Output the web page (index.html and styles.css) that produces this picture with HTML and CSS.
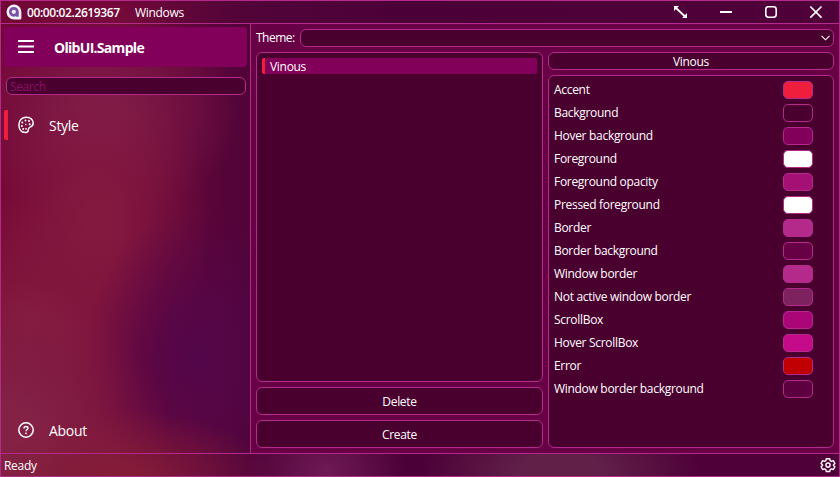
FILE: index.html
```html
<!DOCTYPE html>
<html lang="en">
<head>
<meta charset="utf-8">
<title>OlibUI.Sample</title>
<link rel="stylesheet" href="styles.css">
</head>
<body>
<div class="window">
  <header class="titlebar">
    <svg class="logo" width="16" height="16" viewBox="0 0 16 16"><path d="M8 .5a7.500 7.500 0 1 0 0 15h5.800a1.600 1.600 0 0 0 1.600-1.600V8A7.500 7.500 0 0 0 8 .5z" fill="#f5f0f8"/><circle cx="7.800" cy="7.800" r="3.500" fill="none" stroke="#7950a5" stroke-width="2.700"/><path d="M10 7.800h2.700v4.900H10z" fill="#7950a5"/></svg>
    <span class="clock">00:00:02.2619367</span>
    <span class="platform">Windows</span>
    <div class="controls">
      <svg width="45" height="22" viewBox="0 0 45 22" fill="none" stroke="#fff" stroke-width="1.800"><path d="M18 7l9 8.500"/><path d="M16 5h5l-5 5zM29 17h-5l5-5z" fill="#fff" stroke="none"/></svg>
      <svg width="45" height="22" viewBox="0 0 45 22"><path d="M17 10h12v2H17z" fill="#fff"/></svg>
      <svg width="45" height="22" viewBox="0 0 45 22" fill="none" stroke="#fff" stroke-width="1.6"><rect x="17.800" y="5.800" width="10.400" height="10.400" rx="2.600"/></svg>
      <svg width="45" height="22" viewBox="0 0 45 22" fill="none" stroke="#fff" stroke-width="1.700"><path d="M17.300 5.500l11.200 11.200M28.500 5.500L17.300 16.700"/></svg>
    </div>
  </header>
  <div class="body">
    <nav class="sidebar">
      <div class="pane-head">
        <svg width="16" height="14" viewBox="0 0 16 14" fill="#fff"><path d="M0 0h16v2H0zM0 5.500h16v2H0zM0 11h16v2H0z"/></svg>
        <span>OlibUI.Sample</span>
      </div>
      <div class="search">Search</div>
      <div class="nav-item selected">
        <svg width="16" height="18" viewBox="0 0 16 18"><path d="M8.300 1.200C4.200 1.200.9 4.300.9 8.800c0 4.200 2.200 7.700 6.400 7.700 2.100 0 2.900-1 2.900-2.300 0-1.500.3-2.500 1.900-3.100 1.700-.6 3.100-1.400 3.100-4.100 0-3.300-3-5.800-6.900-5.800z" fill="none" stroke="#fff" stroke-width="1.500"/><g fill="#fff"><circle cx="7.500" cy="4.600" r="1"/><circle cx="11" cy="5.100" r="1"/><circle cx="4.300" cy="6.400" r="1"/><circle cx="11.700" cy="8.300" r="1"/><circle cx="7.800" cy="8.500" r=".7"/><circle cx="3.900" cy="10" r="1"/><circle cx="5.200" cy="13" r="1"/><circle cx="8" cy="12.800" r=".9"/></g></svg>
        <span>Style</span>
      </div>
      <div class="nav-item last">
        <svg width="16" height="16" viewBox="0 0 16 16" fill="none" stroke="#fff" stroke-width="1.500"><circle cx="8" cy="8" r="7.200"/><path d="M6 6.500C6 5.200 6.800 4.500 8 4.500s2 .7 2 1.700C10 7.400 8 7.600 8 9.200" stroke-width="1.400"/><circle cx="8" cy="11.300" r=".9" fill="#fff" stroke="none"/></svg>
        <span>About</span>
      </div>
    </nav>
    <main class="content">
      <div class="theme-row">
        <span>Theme:</span>
        <div class="box combo"><svg width="9" height="6" viewBox="0 0 9 6" fill="none" stroke="#fff" stroke-width="1.100"><path d="M.5.8l4 4 4-4"/></svg></div>
      </div>
      <div class="columns">
        <section class="col">
          <div class="box list"><div class="list-item">Vinous</div></div>
          <div class="box button">Delete</div>
          <div class="box button">Create</div>
        </section>
        <section class="col">
          <div class="box name">Vinous</div>
          <div class="box colors">
            <div class="row"><span>Accent</span><i class="swatch accent"></i></div>
            <div class="row"><span>Background</span><i class="swatch background"></i></div>
            <div class="row"><span>Hover background</span><i class="swatch hover-background"></i></div>
            <div class="row"><span>Foreground</span><i class="swatch foreground"></i></div>
            <div class="row"><span>Foreground opacity</span><i class="swatch foreground-opacity"></i></div>
            <div class="row"><span>Pressed foreground</span><i class="swatch foreground"></i></div>
            <div class="row"><span>Border</span><i class="swatch border"></i></div>
            <div class="row"><span>Border background</span><i class="swatch border-background"></i></div>
            <div class="row"><span>Window border</span><i class="swatch border"></i></div>
            <div class="row"><span>Not active window border</span><i class="swatch inactive"></i></div>
            <div class="row"><span>ScrollBox</span><i class="swatch scrollbox"></i></div>
            <div class="row"><span>Hover ScrollBox</span><i class="swatch scrollbox-hover"></i></div>
            <div class="row"><span>Error</span><i class="swatch error"></i></div>
            <div class="row"><span>Window border background</span><i class="swatch window-background"></i></div>
          </div>
        </section>
      </div>
    </main>
  </div>
  <footer class="statusbar">
    <span>Ready</span>
    <svg width="16" height="16" viewBox="0 0 16 16" fill="none" stroke="#fff" stroke-width="1.400" stroke-linejoin="round"><path d="M6.300 1.700h3.400l.5 1.900 1.200.7 1.900-.6 1.600 2.700-1.400 1.400v.6l1.400 1.400-1.600 2.700-1.900-.6-1.200.7-.5 1.900H6.300l-.5-1.900-1.200-.7-1.900.6-1.600-2.700 1.400-1.400v-.6L1.100 6.400l1.600-2.700 1.900.6 1.200-.7z"/><circle cx="8" cy="8.100" r="2.100"/></svg>
  </footer>
</div>
</body>
</html>
```
FILE: styles.css
```css
* { box-sizing: border-box; }

body {
  margin: 0;
  font: 12px/16px "Open Sans", "Noto Sans", sans-serif;
  letter-spacing: -0.3px;
  color: #fff;
}

svg { display: block; flex: none; }

.window {
  width: 840px;
  height: 477px;
  display: flex;
  flex-direction: column;
  border: 1px solid #b42a8a;
  background:
    radial-gradient(ellipse 150px 70px at 120px 478px, #841c38 10%, rgba(132, 28, 56, 0)),
    radial-gradient(ellipse 170px 170px at 0 450px, #842246 25%, rgba(132, 34, 70, 0)),
    radial-gradient(ellipse 110px 150px at 195px 355px, #54064a 5%, rgba(84, 6, 74, 0)),
    radial-gradient(ellipse 130px 130px at 30px 320px, #84193e 5%, rgba(132, 25, 62, 0)),
    radial-gradient(ellipse 115px 150px at 95px 220px, #84193f 10%, rgba(132, 25, 63, 0)),
    radial-gradient(ellipse 140px 110px at 100px 110px, #7f1c49 10%, rgba(127, 28, 73, 0)),
    radial-gradient(ellipse 80px 60px at 325px 470px, #6e1a54, rgba(110, 26, 84, 0)),
    radial-gradient(ellipse 140px 60px at 560px 470px, #602048 30%, rgba(96, 32, 72, 0)),
    linear-gradient(90deg, #720634 0, #740838 110px, #520439 240px, #4c0038 400px, #500038 840px);
}

.titlebar {
  height: 23px;
  display: flex;
  align-items: center;
  padding-left: 5px;
  border-bottom: 1px solid #b42a8a;
}
.clock { margin-left: 5px; font-weight: 600; letter-spacing: -0.4px; width: 108px; }
.clock, .platform { padding-top: 2px; }
.controls { display: flex; margin: 0 1px 0 auto; }

.body { flex: 1; display: flex; min-height: 0; }

.sidebar {
  width: 250px;
  display: flex;
  flex-direction: column;
  padding: 3px;
  border-right: 1px solid #b42a8a;
}
.pane-head {
  height: 40px;
  display: flex;
  align-items: center;
  gap: 20px;
  padding-left: 14px;
  border-radius: 3px;
  background: #820059;
  font-size: 14px;
  font-weight: 700;
  letter-spacing: -0.7px;
}
.pane-head span { padding-top: 1px; }
.search {
  height: 18px;
  margin: 10px 1px 0 2px;
  padding-left: 3px;
  border: 1px solid #b42a8a;
  border-radius: 6px;
  background: #4a002f;
  color: #8c0f66;
  line-height: 18px;
  letter-spacing: -0.4px;
}
.nav-item {
  height: 30px;
  display: flex;
  align-items: center;
  gap: 15px;
  margin-top: 15px;
  padding-left: 14px;
  font-size: 14px;
}
.nav-item span { padding-top: 2px; }
.nav-item.selected { padding-left: 10px; border-left: 4px solid #ef1e3d; border-radius: 2px; }
.nav-item.last { margin-top: auto; margin-bottom: 5px; }

.content {
  flex: 1;
  display: flex;
  flex-direction: column;
  gap: 5px;
  padding: 5px;
  background: #680045;
}
.box { border: 1px solid #b42a8a; border-radius: 6px; background: #4a002f; }
.theme-row { display: flex; gap: 5px; height: 18px; line-height: 18px; }
.theme-row span { width: 39px; letter-spacing: -0.5px; }
.combo { flex: 1; display: flex; align-items: center; justify-content: flex-end; padding-right: 3px; }
.columns { flex: 1; display: grid; grid-template-columns: 287px 286px; gap: 5px; }
.col { display: flex; flex-direction: column; gap: 5px; }
.list { flex: 1; padding: 5px; }
.list-item { height: 16px; padding-left: 5px; border-left: 3px solid #ef1e3d; border-radius: 2px; background: #820059; line-height: 18px; }
.button { height: 28px; line-height: 28px; text-align: center; }
.name { height: 18px; line-height: 18px; text-align: center; }
.colors { flex: 1; display: flex; flex-direction: column; gap: 5px; padding: 5px 20px 5px 5px; }
.row { height: 18px; display: flex; align-items: center; justify-content: space-between; }
.swatch { width: 30px; height: 18px; border: 1px solid #b42a8a; border-radius: 5px; }
.accent { background: #ef1e3d; }
.background { background: #4a002f; }
.hover-background { background: #820059; }
.foreground { background: #fff; }
.foreground-opacity { background: #a41074; }
.border { background: #b42a8a; }
.border-background { background: #680045; }
.inactive { background: #7d225f; }
.scrollbox { background: #ab0678; }
.scrollbox-hover { background: #c50b8a; }
.error { background: #c00000; }
.window-background { background: #5c0040; }

.statusbar {
  height: 23px;
  display: flex;
  align-items: center;
  justify-content: space-between;
  padding: 0 3px 0 3px;
  border-top: 1px solid #b42a8a;
}
.statusbar span { padding-top: 2px; }
```
